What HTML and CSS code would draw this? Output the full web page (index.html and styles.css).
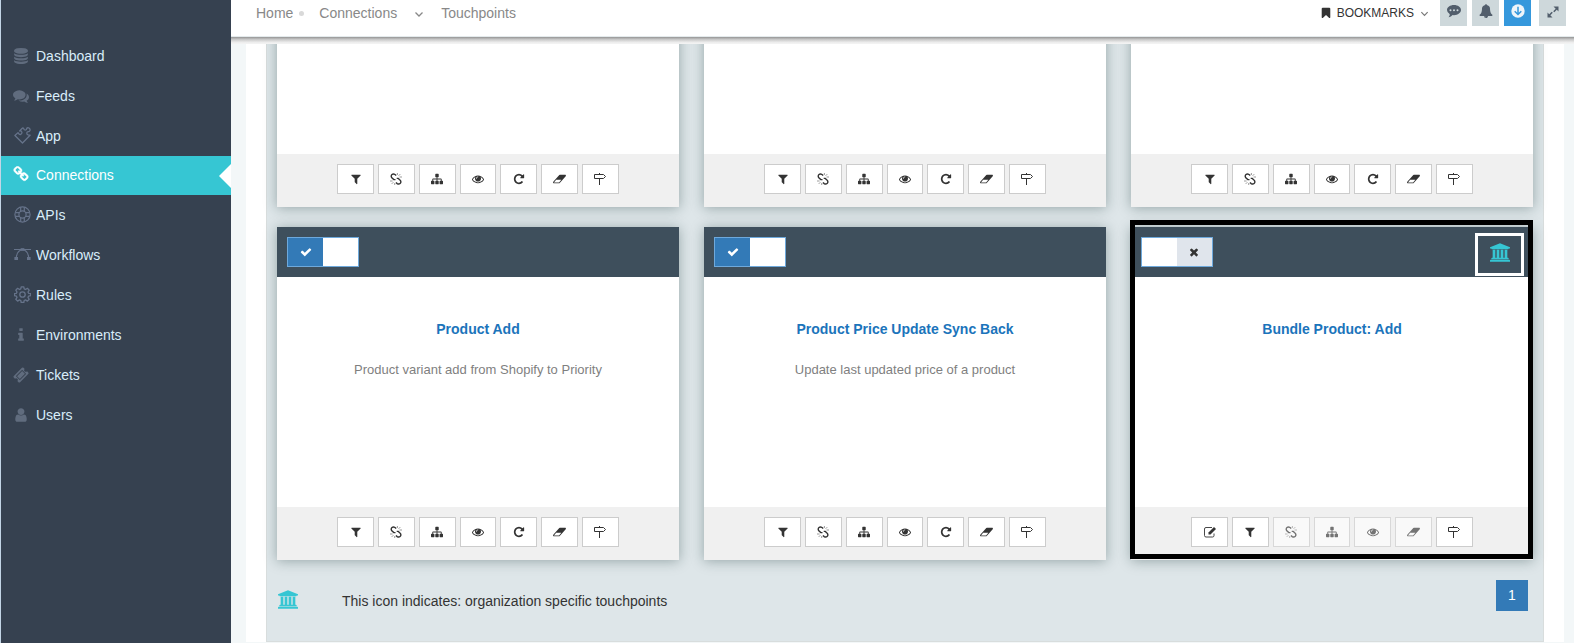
FILE: index.html
```html
<!DOCTYPE html>
<html lang="en">
<head>
<meta charset="utf-8">
<title>Touchpoints</title>
<link rel="stylesheet" href="styles.css">
</head>
<body>
<svg class="sprite" aria-hidden="true">
  <symbol id="filter" viewBox="0 0 1792 1792"><path d="M1595 295q17 41-14 70l-493 493v742q0 42-39 59-13 5-25 5-27 0-45-19l-256-256q-19-19-19-45v-486l-493-493q-31-29-14-70 17-39 59-39h1280q42 0 59 39z"/></symbol>
  <symbol id="check" viewBox="0 0 1792 1792"><path d="M1671 566q0 40-28 68l-724 724-136 136q-28 28-68 28t-68-28l-136-136-362-362q-28-28-28-68t28-68l136-136q28-28 68-28t68 28l294 295 656-657q28-28 68-28t68 28l136 136q28 28 28 68z"/></symbol>
  <symbol id="times" viewBox="0 0 1792 1792"><path d="M1490 1322q0 40-28 68l-136 136q-28 28-68 28t-68-28l-294-294-294 294q-28 28-68 28t-68-28l-136-136q-28-28-28-68t28-68l294-294-294-294q-28-28-28-68t28-68l136-136q28-28 68-28t68 28l294 294 294-294q28-28 68-28t68 28l136 136q28 28 28 68t-28 68l-294 294 294 294q28 28 28 68z"/></symbol>
  <symbol id="repeat" viewBox="0 0 1792 1792"><path d="M1664 256v448q0 26-19 45t-45 19h-448q-42 0-59-40-17-39 14-69l138-138q-148-137-349-137-104 0-198.500 40.500t-163.500 109.500-109.500 163.500-40.500 198.500 40.500 198.500 109.500 163.500 163.500 109.500 198.500 40.500q119 0 225-52t179-147q7-10 23-12 15 0 25 9l137 138q9 8 9.500 20.500t-7.500 22.500q-109 132-264 204.500t-327 72.500q-156 0-298-61t-245-164-164-245-61-298 61-298 164-245 245-164 298-61q147 0 284.500 55.500t244.500 156.500l130-129q29-31 70-14 39 17 39 59z"/></symbol>
  <symbol id="sitemap" viewBox="0 0 1792 1792"><path d="M1792 1248v320q0 40-28 68t-68 28h-320q-40 0-68-28t-28-68v-320q0-40 28-68t68-28h96v-192h-512v192h96q40 0 68 28t28 68v320q0 40-28 68t-68 28h-320q-40 0-68-28t-28-68v-320q0-40 28-68t68-28h96v-192h-512v192h96q40 0 68 28t28 68v320q0 40-28 68t-68 28h-320q-40 0-68-28t-28-68v-320q0-40 28-68t68-28h96v-192q0-52 38-90t90-38h512v-192h-96q-40 0-68-28t-28-68v-320q0-40 28-68t68-28h320q40 0 68 28t28 68v320q0 40-28 68t-68 28h-96v192h512q52 0 90 38t38 90v192h96q40 0 68 28t28 68z"/></symbol>
  <symbol id="eye" viewBox="0 0 1792 1792"><path d="M1664 960q-152-236-381-353 61 104 61 225 0 185-131.500 316.500t-316.500 131.500-316.500-131.500-131.500-316.500q0-121 61-225-229 117-381 353 133 205 333.500 326.500t434.500 121.500 434.500-121.500 333.500-326.500zm-720-384q0-20-14-34t-34-14q-125 0-214.500 89.500t-89.500 214.500q0 20 14 34t34 14 34-14 14-34q0-86 61-147t147-61q20 0 34-14t14-34zm848 384q0 34-20 69-140 230-376.500 368.500t-499.500 138.500-499.500-139-376.500-368q-20-35-20-69t20-69q140-229 376.500-368t499.500-139 499.500 139 376.500 368q20 35 20 69z"/></symbol>
  <symbol id="eraser" viewBox="0 0 1920 1792"><path d="M896 1408l336-384h-768l-336 384h768zm1013-1077q15 34 9.500 71.500t-30.500 65.500l-896 1024q-38 44-96 44h-768q-38 0-69.500-20.500t-47.500-54.500q-15-34-9.500-71.500t30.500-65.500l896-1024q38-44 96-44h768q38 0 69.500 20.500t47.500 54.500z"/></symbol>
  <symbol id="unlink" viewBox="0 0 12 12"><g fill="none" stroke="currentColor"><path stroke-width="1.400" d="M6.200 2.600 5 1.500Q3.300.4 2 1.600T1.600 4.500L3.800 6.600H5.500M5.900 9.500 7.200 10.600q1.600 1 2.900-.1t.4-2.900L8.300 5.400H6.700"/><path stroke-width=".7" opacity=".7" d="M7.400 0v2M8.600 2.800 10.300 1.100M9.500 4H12M4.700 12v-2M3.400 9.200 1.700 10.900M2.600 8H0"/></g></symbol>
  <symbol id="signs" viewBox="0 0 12 12"><path fill="none" stroke="currentColor" d="M.5 1.500h9l2 2-2 2h-9ZM5.500 5.500V12M5.500 0v1.500"/></symbol>
  <symbol id="edit" viewBox="0 0 12 12"><path fill="none" stroke="currentColor" stroke-width=".9" d="M8 1.500H2Q.5 1.500.5 3v6.500Q.5 11 2 11h6.500q1.500 0 1.500-1.500V7.500"/><path d="M4.500 6.500 10 1l2 2-5.500 5.500h-2Z"/></symbol>
  <symbol id="bank" viewBox="0 0 1920 1792"><path d="M960 0l960 384v128h-128q0 26-20.500 45t-48.500 19h-1526q-28 0-48.500-19t-20.500-45h-128v-128zm-704 640h256v768h128v-768h256v768h128v-768h256v768h128v-768h256v768h59q28 0 48.500 19t20.500 45v64h-1664v-64q0-26 20.500-45t48.500-19h59v-768zm1595 960q28 0 48.500 19t20.500 45v128h-1920v-128q0-26 20.500-45t48.500-19h1782z"/></symbol>
  <symbol id="bookmark" viewBox="0 0 1792 1792"><path d="M1420 128q23 0 44 9 33 13 52.500 41t19.500 62v1289q0 34-19.500 62t-52.500 41q-19 8-44 8-48 0-83-32l-441-424-441 424q-36 33-83 33-23 0-44-9-33-13-52.500-41t-19.500-62v-1289q0-34 19.500-62t52.500-41q21-9 44-9h1048z"/></symbol>
  <symbol id="bell" viewBox="0 0 1792 1792"><path d="M912 1696q0-16-16-16-59 0-101.500-42.500t-42.500-101.500q0-16-16-16t-16 16q0 73 51.500 124.500t124.500 51.500q16 0 16-16zm816-288q0 52-38 90t-90 38h-448q0 106-75 181t-181 75-181-75-75-181h-448q-52 0-90-38t-38-90q50-42 91-88t85-119.500 74.500-158.500 50-206 19.500-260q0-152 117-282.500t307-158.500q-8-19-8-39 0-40 28-68t68-28 68 28 28 68q0 20-8 39 190 28 307 158.500t117 282.500q0 139 19.500 260t50 206 74.500 158.500 85 119.500 91 88z"/></symbol>
  <symbol id="comment" viewBox="0 0 14 14"><path fill-rule="evenodd" d="M7 1c3.900 0 7 2.300 7 5.100S10.900 11.200 7 11.200q-.8 0-1.400-.1Q4.200 12.800 1.600 13.200q1.200-1.200 1.200-2.900Q0 8.700 0 6.100C0 3.300 3.100 1 7 1ZM3.500 5.200a1 1 0 1 0 0 2 1 1 0 0 0 0-2Zm3.500 0a1 1 0 1 0 0 2 1 1 0 0 0 0-2Zm3.500 0a1 1 0 1 0 0 2 1 1 0 0 0 0-2Z"/></symbol>
  <symbol id="download" viewBox="0 0 14 14"><circle cx="7" cy="7" r="6.700"/><path fill="none" stroke="#3598dc" stroke-width="1.500" d="M7 2.800v7.400M3.700 7.200 7 10.500l3.300-3.300"/></symbol>
  <symbol id="expand" viewBox="0 0 12 12"><path d="M6.500.5h5v5l-1.700-1.700-2.500 2.500-1.100-1.100 2.500-2.500ZM5.500 11.500h-5v-5l1.700 1.700 2.500-2.500 1.100 1.100-2.500 2.500Z"/></symbol>
  <symbol id="angle" viewBox="0 0 10 10"><path fill="none" stroke="currentColor" stroke-width="1.300" d="M1.500 3.500 5 7l3.500-3.500"/></symbol>
  <symbol id="database" viewBox="0 0 1792 1792"><path d="M896 768q237 0 443-43t325-127v170q0 69-103 128t-280 93.500-385 34.500-385-34.500-280-93.500-103-128v-170q119 84 325 127t443 43zm0 768q237 0 443-43t325-127v170q0 69-103 128t-280 93.500-385 34.500-385-34.500-280-93.500-103-128v-170q119 84 325 127t443 43zm0-384q237 0 443-43t325-127v170q0 69-103 128t-280 93.500-385 34.500-385-34.500-280-93.500-103-128v-170q119 84 325 127t443 43zm0-1152q208 0 385 34.500t280 93.500 103 128v128q0 69-103 128t-280 93.500-385 34.500-385-34.500-280-93.500-103-128v-128q0-69 103-128t280-93.500 385-34.500z"/></symbol>
  <symbol id="comments" viewBox="0 0 1792 1792"><path d="M1408 768q0 139-94 257t-256.500 186.500-353.500 68.500q-86 0-176-16-124 88-278 128-36 9-86 16h-3q-11 0-20.500-8t-11.500-21q-1-3-1-6.500t.5-6.500 2-6l2.500-5 3.500-5.500 4-5 4.500-5 4-4.500q5-6 23-25t26-29.500 22.500-29 25-38.500 20.500-44q-124-72-195-177t-71-224q0-139 94-257t256.500-186.500 353.500-68.500 353.500 68.500 256.500 186.500 94 257zm384 256q0 120-71 224.500t-195 176.500q10 24 20.500 44t25 38.500 22.500 29 26 29.500 23 25q1 1 4 4.500t4.500 5 4 5 3.500 5.500l2.500 5 2 6 .5 6.500-1 6.500q-3 14-13 22t-22 7q-50-7-86-16-154-40-278-128-90 16-176 16-271 0-472-132 58 4 88 4 161 0 309-45t264-129q125-92 192-212t67-254q0-77-23-152 129 71 204 178t75 230z"/></symbol>
  <symbol id="user" viewBox="0 0 1792 1792"><path d="M1536 1399q0 109-62.500 187t-150.500 78h-854q-88 0-150.500-78t-62.500-187q0-85 8.500-160.500t31.500-152 58.500-131 94-89 134.500-34.500q131 128 313 128t313-128q76 0 134.500 34.500t94 89 58.500 131 31.500 152 8.500 160.500zm-256-887q0 159-112.500 271.500t-271.500 112.500-271.500-112.500-112.500-271.500 112.500-271.500 271.500-112.500 271.500 112.500 112.500 271.500z"/></symbol>
  <symbol id="info" viewBox="0 0 1792 1792"><path d="M1216 1344v128q0 26-19 45t-45 19h-512q-26 0-45-19t-19-45v-128q0-26 19-45t45-19h64v-384h-64q-26 0-45-19t-19-45v-128q0-26 19-45t45-19h384q26 0 45 19t19 45v576h64q26 0 45 19t19 45zm-128-1152v192q0 26-19 45t-45 19h-256q-26 0-45-19t-19-45v-192q0-26 19-45t45-19h256q26 0 45 19t19 45z"/></symbol>
  <symbol id="ticket" viewBox="0 0 1792 1792"><path d="M1024 452l316 316-572 572-316-316zm-211 979l618-618q19-19 19-45t-19-45l-362-362q-18-18-45-18t-45 18l-618 618q-19 19-19 45t19 45l362 362q18 18 45 18t45-18zm889-637l-907 908q-37 37-90.500 37t-90.500-37l-126-126q56-56 56-136t-56-136-136-56-136 56l-125-126q-37-37-37-90.500t37-90.500l907-906q37-37 90.500-37t90.500 37l125 125q-56 56-56 136t56 136 136 56 136-56l126 125q37 37 37 90.500t-37 90.500z"/></symbol>
  <symbol id="link" viewBox="0 0 1792 1792"><path d="M1520 1216q0-40-28-68l-208-208q-28-28-68-28-42 0-72 32 3 3 19 18.500t21.500 21.500 15 19 13 25.500 3.500 27.500q0 40-28 68t-68 28q-15 0-27.500-3.500t-25.500-13-19-15-21.500-21.500-18.500-19q-33 31-33 73 0 40 28 68l206 207q27 27 68 27 40 0 68-26l147-146q28-28 28-67zm-703-705q0-40-28-68l-206-207q-28-28-68-28-39 0-68 27l-147 146q-28 28-28 67 0 40 28 68l208 208q27 27 68 27 42 0 72-31-3-3-19-18.500t-21.500-21.500-15-19-13-25.500-3.500-27.500q0-40 28-68t68-28q15 0 27.500 3.500t25.500 13 19 15 21.500 21.500 18.500 19q33-31 33-73zm895 705q0 120-85 203l-147 146q-83 83-203 83-121 0-204-85l-206-207q-83-83-83-203 0-123 88-209l-88-88q-86 88-208 88-120 0-204-84l-208-208q-84-84-84-204t85-203l147-146q83-83 203-83 121 0 204 85l206 207q83 83 83 203 0 123-88 209l88 88q86-88 208-88 120 0 204 84l208 208q84 84 84 204z"/></symbol>
  <symbol id="puzzle" viewBox="0 0 17 17"><path fill="none" stroke="currentColor" stroke-width="1.300" stroke-linejoin="round" d="M8.500 16 .9 8.500 4 5.600Q5 8 6.700 7.400 8.600 6.300 7.600 4.600 7 3.500 5.600 4L8 1.500q.8-.8 1.600-.2.2 1.900 1.600 1.900 1.600-.2 1.600-1.900.8-.9 2.200-.3 1.400.8 1 2.300-.3 1.200-1.500 1.400-1.600-.2-1.700 1.500 0 1.200 1.400 1.700 1 .2 1.900.3Z"/></symbol>
  <symbol id="ring" viewBox="0 0 17 17"><g fill="none" stroke="currentColor" stroke-width="1.200"><circle cx="8.500" cy="8.500" r="7.600"/><circle cx="8.500" cy="8.500" r="3.600"/><path d="M6.700 1.200v4.200M10.300 1.200v4.200M6.700 15.800v-4.200M10.300 15.800v-4.200M1.200 6.700h4.200M1.200 10.300h4.200M15.800 6.700h-4.200M15.800 10.300h-4.200"/></g></symbol>
  <symbol id="vector" viewBox="0 0 17 17"><g fill="none" stroke="currentColor" stroke-width="1.200"><path d="M0 3.500h17M2.300 11.500Q3 4.500 8.500 3.500q5.500 1 6.200 8"/><path fill="currentColor" d="M7.200 2.800h2.600v1.400H7.200ZM1 11.500h2.400v1.800H1ZM13.600 11.500H16v1.800h-2.400Z"/></g></symbol>
  <symbol id="gear" viewBox="0 0 17 17"><g fill="none" stroke="currentColor" stroke-width="1.300" stroke-linejoin="round"><circle cx="8.500" cy="8.500" r="2.700"/><path d="M7.200.8h2.600l.4 2.100 1.300.6 1.900-1.200 1.800 1.800-1.200 1.900.6 1.300 2.100.4v1.900l-2.100.5-.6 1.300 1.200 1.900-1.800 1.800-1.900-1.200-1.300.6-.4 2H7.200l-.4-2-1.300-.6-1.900 1.200-1.800-1.800L3 11.400l-.6-1.300-2-.5V7.700l2-.4L3 6 1.800 4.100l1.800-1.800 1.900 1.200 1.300-.6Z"/></g></symbol>
</svg>

<div class="app">
  <nav class="sidebar">
    <a class="nav-item first"><svg class="nav-icon fa"><use href="#database"/></svg>Dashboard</a>
    <a class="nav-item first"><svg class="nav-icon fa"><use href="#comments"/></svg>Feeds</a>
    <a class="nav-item first"><svg class="nav-icon"><use href="#puzzle"/></svg>App</a>
    <a class="nav-item active"><svg class="nav-icon fa"><use href="#link"/></svg>Connections</a>
    <a class="nav-item"><svg class="nav-icon"><use href="#ring"/></svg>APIs</a>
    <a class="nav-item"><svg class="nav-icon"><use href="#vector"/></svg>Workflows</a>
    <a class="nav-item"><svg class="nav-icon"><use href="#gear"/></svg>Rules</a>
    <a class="nav-item"><svg class="nav-icon fa"><use href="#info"/></svg>Environments</a>
    <a class="nav-item"><svg class="nav-icon fa"><use href="#ticket"/></svg>Tickets</a>
    <a class="nav-item"><svg class="nav-icon fa"><use href="#user"/></svg>Users</a>
  </nav>

  <div class="page">
    <header class="topbar">
      <div class="crumbs">
        <span>Home</span><i class="dot"></i><span>Connections</span><svg class="angle"><use href="#angle"/></svg><span>Touchpoints</span>
      </div>
      <div class="tools">
        <svg class="mark"><use href="#bookmark"/></svg><span class="label">BOOKMARKS</span><svg class="angle small"><use href="#angle"/></svg>
        <a class="tool"><svg class="i14"><use href="#comment"/></svg></a>
        <a class="tool"><svg class="i14"><use href="#bell"/></svg></a>
        <a class="tool blue"><svg class="i14"><use href="#download"/></svg></a>
        <a class="tool last"><svg class="i12"><use href="#expand"/></svg></a>
      </div>
    </header>
    <div class="shade"></div>

    <main class="content">
      <section class="panel">
        <div class="cards">
          <article class="card partial">
            <div class="body"></div>
            <footer class="actions"><a class="btn"><svg><use href="#filter"/></svg></a><a class="btn"><svg><use href="#unlink"/></svg></a><a class="btn"><svg><use href="#sitemap"/></svg></a><a class="btn"><svg><use href="#eye"/></svg></a><a class="btn"><svg><use href="#repeat"/></svg></a><a class="btn"><svg class="wide"><use href="#eraser"/></svg></a><a class="btn"><svg><use href="#signs"/></svg></a></footer>
          </article>
          <article class="card partial">
            <div class="body"></div>
            <footer class="actions"><a class="btn"><svg><use href="#filter"/></svg></a><a class="btn"><svg><use href="#unlink"/></svg></a><a class="btn"><svg><use href="#sitemap"/></svg></a><a class="btn"><svg><use href="#eye"/></svg></a><a class="btn"><svg><use href="#repeat"/></svg></a><a class="btn"><svg class="wide"><use href="#eraser"/></svg></a><a class="btn"><svg><use href="#signs"/></svg></a></footer>
          </article>
          <article class="card partial">
            <div class="body"></div>
            <footer class="actions"><a class="btn"><svg><use href="#filter"/></svg></a><a class="btn"><svg><use href="#unlink"/></svg></a><a class="btn"><svg><use href="#sitemap"/></svg></a><a class="btn"><svg><use href="#eye"/></svg></a><a class="btn"><svg><use href="#repeat"/></svg></a><a class="btn"><svg class="wide"><use href="#eraser"/></svg></a><a class="btn"><svg><use href="#signs"/></svg></a></footer>
          </article>

          <article class="card">
            <header class="head"><span class="switch"><b class="on"><svg><use href="#check"/></svg></b><b></b></span></header>
            <div class="body"><h3>Product Add</h3><p>Product variant add from Shopify to Priority</p></div>
            <footer class="actions"><a class="btn"><svg><use href="#filter"/></svg></a><a class="btn"><svg><use href="#unlink"/></svg></a><a class="btn"><svg><use href="#sitemap"/></svg></a><a class="btn"><svg><use href="#eye"/></svg></a><a class="btn"><svg><use href="#repeat"/></svg></a><a class="btn"><svg class="wide"><use href="#eraser"/></svg></a><a class="btn"><svg><use href="#signs"/></svg></a></footer>
          </article>
          <article class="card">
            <header class="head"><span class="switch"><b class="on"><svg><use href="#check"/></svg></b><b></b></span></header>
            <div class="body"><h3>Product Price Update Sync Back</h3><p>Update last updated price of a product</p></div>
            <footer class="actions"><a class="btn"><svg><use href="#filter"/></svg></a><a class="btn"><svg><use href="#unlink"/></svg></a><a class="btn"><svg><use href="#sitemap"/></svg></a><a class="btn"><svg><use href="#eye"/></svg></a><a class="btn"><svg><use href="#repeat"/></svg></a><a class="btn"><svg class="wide"><use href="#eraser"/></svg></a><a class="btn"><svg><use href="#signs"/></svg></a></footer>
          </article>
          <article class="card">
            <header class="head"><span class="switch"><b></b><b class="off"><svg><use href="#times"/></svg></b></span><span class="org"><svg class="bank"><use href="#bank"/></svg></span></header>
            <div class="body"><h3>Bundle Product: Add</h3></div>
            <footer class="actions"><a class="btn"><svg><use href="#edit"/></svg></a><a class="btn"><svg><use href="#filter"/></svg></a><a class="btn off"><svg><use href="#unlink"/></svg></a><a class="btn off"><svg><use href="#sitemap"/></svg></a><a class="btn off"><svg><use href="#eye"/></svg></a><a class="btn off"><svg class="wide"><use href="#eraser"/></svg></a><a class="btn"><svg><use href="#signs"/></svg></a></footer>
            <div class="outline"></div>
          </article>
        </div>
        <div class="legend">
          <svg class="bank"><use href="#bank"/></svg>
          <span class="note">This icon indicates: organization specific touchpoints</span>
          <a class="pager">1</a>
        </div>
      </section>
    </main>
  </div>
</div>
</body>
</html>
```
FILE: styles.css
```css
* { box-sizing: border-box; }
body { margin: 0; font-family: "Liberation Sans", Arial, sans-serif; font-size: 14px; color: #333; background: #fff; }
svg { fill: currentColor; display: block; flex: none; }
.sprite { display: none; }
.app { display: flex; width: 1574px; height: 643px; overflow: hidden; }

.sidebar { width: 231px; flex: none; background: #364150; border-left: 1px solid #c3d5e6; padding-top: 36px; }
.nav-item { display: flex; align-items: center; height: 39px; margin-bottom: 1px; padding-left: 13px; color: #d9edfa; line-height: 39px; position: relative; }
.nav-item.first { padding-top: 2px; }
.nav-icon { width: 17px; height: 17px; margin: -2px 5px 0 0; color: #66738a; }
.nav-icon.fa { width: 16px; height: 16px; margin: -2px 7px 0 -1px; color: #606c7e; }
.nav-item.active { background: #36c6d3; color: #fff; }
.nav-item.active .nav-icon { color: #fff; margin-top: -4px; stroke: #fff; stroke-width: 50px; }
.nav-item.active::after { content: ""; position: absolute; right: 0; top: 8px; border: 12px solid transparent; border-left: 0; border-right-color: #fff; }

.page { flex: 1; display: flex; flex-direction: column; min-width: 0; }
.topbar { height: 37px; flex: none; display: flex; justify-content: space-between; border-bottom: 1px solid #e4eaec; }
.crumbs { display: flex; align-items: center; height: 26px; padding-left: 25px; color: #888; }
.dot { width: 5px; height: 5px; border-radius: 50%; background: #d9d9d9; margin: 0 15px 0 6px; }
.angle { width: 10px; height: 10px; margin: 2px 17px 0 17px; }
.tools { display: flex; align-items: center; height: 26px; padding-right: 8px; font-size: 12px; }
.mark { width: 12px; height: 12px; margin-right: 5px; }
.angle.small { width: 9px; height: 9px; margin: 0 6px 0 6px; color: #777; }
.tool { width: 27px; height: 26px; margin-left: 5px; background: #ced8db; color: #525e6c; display: flex; justify-content: center; padding-top: 4px; }
.tool.blue { background: #3598dc; color: #eef5fa; }
.tool.last { margin-left: 8px; padding-top: 6px; }
.i14 { width: 14px; height: 14px; }
.i12 { width: 12px; height: 12px; }
.shade { height: 7px; flex: none; background: linear-gradient(#959595, #c8c8c8 35%, #ececec 75%, #f4f4f4); }

.content { height: 599px; flex: none; padding: 0 10px 1px 15px; background: #f3f7f8; }
.panel { height: 598px; margin: 0 20px; padding: 0 10px; background: #dee6e9; border: 1px solid #d8dddd; border-top: 0; box-shadow: -20px 0 #fff, 20px 0 #fff; clip-path: inset(0 -20px -1px -20px); }
.cards { display: grid; grid-template-columns: repeat(3, 402px); grid-template-rows: 163px 333px; gap: 20px 25px; }
.card { display: flex; flex-direction: column; background: #fff; box-shadow: 0 1px 12px rgba(20, 50, 50, .36); position: relative; }
.card.partial { margin-top: -20px; }
.head { height: 50px; flex: none; padding: 10px 9px 0 10px; background: #3e4f5c; display: flex; justify-content: space-between; }
.switch { width: 72px; height: 30px; border: 1px solid #6ea9dc; display: flex; background: #fff; }
.switch b { width: 35px; height: 28px; display: flex; align-items: center; justify-content: center; }
.switch .on { background: #337ab7; color: #fff; }
.switch .off { background: #e0e5ec; width: 36px; }
.switch svg { width: 12px; height: 12px; }
.org { width: 49px; height: 43px; margin-top: -4px; border: 3px solid #fff; padding: 7px 0 0 12px; }
.bank { width: 20px; height: 19px; color: #36c6d3; }
.body { flex: 1; text-align: center; }
.body h3 { margin: 43px 0 0; font-size: 14px; line-height: 18px; color: #1b74bb; }
.body p { margin: 23px 0 0; font-size: 13px; line-height: 18px; color: #7f7f7f; }
.actions { height: 53px; flex: none; background: #f0f0f0; padding-top: 10px; display: flex; justify-content: center; gap: 4px; }
.btn { width: 36.800px; height: 30px; border: 1px solid #ccc; background: #fff; display: flex; align-items: center; justify-content: center; }
.btn svg { width: 12px; height: 12px; }
.btn svg.wide { width: 13px; }
.btn.off { opacity: .65; }
.outline { position: absolute; left: -1px; top: -7px; width: 403px; height: 339px; border: 5px solid #000; }

.legend { display: flex; padding: 20px 5px 0 1px; }
.legend .bank { margin-top: 10px; }
.note { margin: 12px auto 0 44px; line-height: 18px; }
.pager { width: 32px; height: 31px; background: #337ab7; color: #fff; text-align: center; line-height: 31px; }
```
